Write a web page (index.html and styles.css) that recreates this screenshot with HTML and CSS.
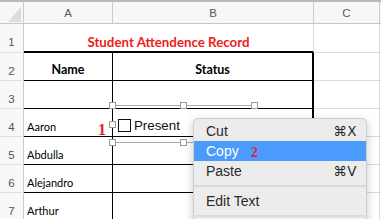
FILE: index.html
```html
<!DOCTYPE html>
<html>
<head>
<meta charset="utf-8">
<link rel="stylesheet" href="styles.css">
</head>
<body>
<div class="sheet">
  <div class="grid">
    <div class="c hd corner"><span class="tri"></span></div>
    <div class="c hd">A</div>
    <div class="c hd">B</div>
    <div class="c hd">C</div>
    <div class="c hd last"></div>

    <div class="c rn r1">1</div>
    <div class="c title">Student Attendence Record</div>
    <div class="c r1"></div>
    <div class="c r1 last"></div>

    <div class="c rn">2</div>
    <div class="c ta bold center">Name</div>
    <div class="c tb bold center">Status</div>
    <div class="c"></div>
    <div class="c last"></div>

    <div class="c rn">3</div>
    <div class="c ta"></div>
    <div class="c tb"></div>
    <div class="c"></div>
    <div class="c last"></div>

    <div class="c rn">4</div>
    <div class="c ta">Aaron</div>
    <div class="c tb"></div>
    <div class="c"></div>
    <div class="c last"></div>

    <div class="c rn">5</div>
    <div class="c ta">Abdulla</div>
    <div class="c tb"></div>
    <div class="c"></div>
    <div class="c last"></div>

    <div class="c rn">6</div>
    <div class="c ta">Alejandro</div>
    <div class="c tb"></div>
    <div class="c"></div>
    <div class="c last"></div>

    <div class="c rn">7</div>
    <div class="c ta">Arthur</div>
    <div class="c tb"></div>
    <div class="c"></div>
    <div class="c last"></div>
  </div>

  <div class="ctl">
    <span class="h h-tl"></span>
    <span class="h h-tm"></span>
    <span class="h h-tr"></span>
    <span class="h h-ml"></span>
    <span class="h h-bl"></span>
    <span class="h h-bm"></span>
    <span class="box"></span>
    <span class="lbl">Present</span>
  </div>

  <div class="note n1">1</div>

  <div class="menu">
    <div class="mi"><span>Cut</span><span class="sc">⌘X</span></div>
    <div class="mi active"><span>Copy</span></div>
    <div class="mi"><span>Paste</span><span class="sc">⌘V</span></div>
    <div class="sep"></div>
    <div class="mi"><span>Edit Text</span></div>
    <div class="sep"></div>
  </div>

  <div class="note n2">2</div>
</div>
</body>
</html>
```

FILE: styles.css
```css
html, body {
  margin: 0;
  padding: 0;
  background: #ffffff;
  overflow: hidden;
}

.sheet {
  position: relative;
  width: 381px;
  height: 219px;
  border-top: 2px solid #b9b9b9;
  box-sizing: border-box;
  font-family: Lato, "Liberation Sans", sans-serif;
  overflow: hidden;
}

.grid {
  display: grid;
  grid-template-columns: 24px 89px 201px 66px 1fr;
  grid-template-rows: 22px 29px repeat(6, 28px);
}

.c {
  box-sizing: border-box;
  border-right: 1px solid #dadada;
  border-bottom: 1px solid #dadada;
  display: flex;
  align-items: flex-end;
  padding: 0 0 2px 3px;
  font-size: 11px;
  line-height: 14px;
  color: #000;
  white-space: nowrap;
}

.c.last {
  border-right: none;
}

.hd {
  background: #f7f7f7;
  border-right-color: #cbcbcb;
  border-bottom-color: #c6c6c6;
  justify-content: center;
  align-items: center;
  padding: 1px 0 0 0;
  font-family: "Liberation Sans", Arial, sans-serif;
  font-size: 11.5px;
  color: #5a5a5a;
}

.corner {
  position: relative;
}

.tri {
  position: absolute;
  right: 2px;
  bottom: 1px;
  width: 0;
  height: 0;
  border-left: 13px solid transparent;
  border-bottom: 15px solid #dcdcdc;
}

.rn {
  background: #f8f8f8;
  border-right-color: #cbcbcb;
  border-bottom-color: #e0e0e0;
  justify-content: center;
  padding: 0 0 2px 0;
  font-family: "Liberation Sans", Arial, sans-serif;
  font-size: 11.5px;
  color: #555;
}

.rn.r1 {
  padding-bottom: 3px;
}

.title {
  grid-column: span 2;
  justify-content: center;
  border-bottom: 2px solid #000;
  padding: 0 0 2px 0;
  color: #ee1c1c;
  font-weight: 700;
  font-size: 13.3px;
}

.ta {
  border-right-color: #000;
  border-bottom-color: #000;
}

.tb {
  border-right: 2px solid #000;
  border-bottom-color: #000;
}

.bold {
  font-weight: 700;
  font-size: 12.5px;
}

.center {
  justify-content: center;
  padding-left: 0;
  padding-bottom: 3px;
}

/* checkbox form control (floating object) */
.ctl {
  position: absolute;
  left: 112px;
  top: 103px;
  width: 142px;
  height: 38px;
  box-sizing: border-box;
  border-top: 1px solid #a9a9a9;
  border-bottom: 1px solid #a9a9a9;
  display: flex;
  align-items: center;
  gap: 3px;
  padding: 2px 0 0 6px;
}

.h {
  position: absolute;
  width: 7px;
  height: 7px;
  box-sizing: border-box;
  background: #fff;
  border: 1px solid #9a9a9a;
}

.h-tl { left: -3px; top: -4px; }
.h-tm { left: 68px; top: -4px; }
.h-tr { left: 139px; top: -4px; }
.h-ml { left: -3px; top: 15px; }
.h-bl { left: -3px; bottom: -4px; }
.h-bm { left: 68px; bottom: -4px; }

.box {
  width: 13px;
  height: 13px;
  box-sizing: border-box;
  border: 1px solid #111;
  background: #fff;
}

.lbl {
  font-family: "Liberation Sans", Arial, sans-serif;
  font-size: 13.3px;
  color: #111;
}

.note {
  position: absolute;
  font-family: "Liberation Serif", "DejaVu Serif", serif;
  font-weight: 700;
  color: #e3232a;
  line-height: 1;
}

.n1 {
  left: 98px;
  top: 120px;
  font-size: 16px;
}

.n2 {
  left: 251px;
  top: 144px;
  font-size: 14px;
}

/* context menu */
.menu {
  position: absolute;
  left: 193px;
  top: 116px;
  width: 174px;
  height: 120px;
  box-sizing: border-box;
  background: #ececec;
  border: 1px solid #cfcfcf;
  border-radius: 5px;
  box-shadow: 0 3px 10px rgba(0, 0, 0, 0.22);
  padding-top: 2px;
  font-family: "Liberation Sans", Arial, sans-serif;
  font-size: 14px;
  color: #2a2a2a;
}

.mi {
  height: 20px;
  line-height: 20px;
  display: flex;
  justify-content: space-between;
  padding: 0 9px 0 12px;
}

.mi.active {
  background: #4a9bfb;
  color: #fff;
}

.sc {
  font-family: "DejaVu Sans", "Liberation Sans", sans-serif;
  font-size: 13.5px;
  letter-spacing: 0.5px;
}

.sep {
  height: 2px;
  background: #dadada;
  margin: 4px 0;
}
```
